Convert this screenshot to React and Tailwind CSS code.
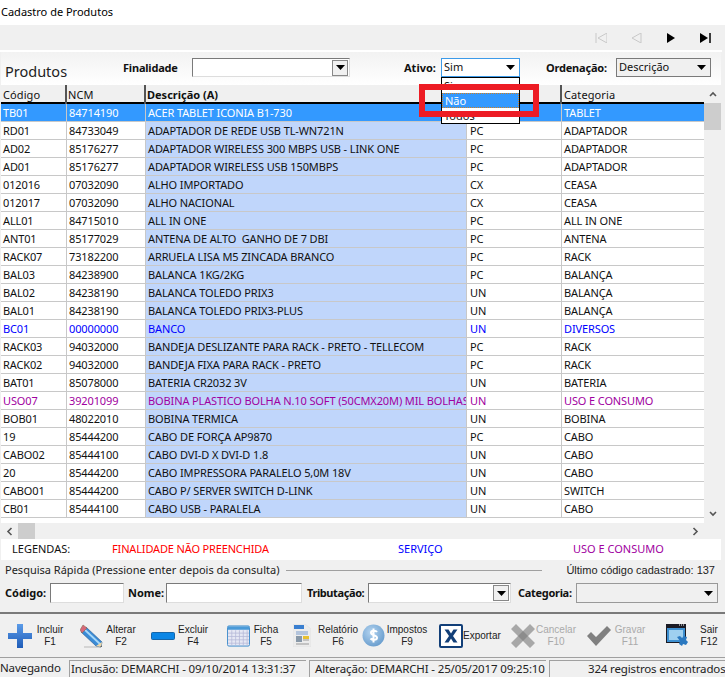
import React from "react";

const BLUE = "text-[#0000ff]";
const PURPLE = "text-[#a000a0]";

const rows = [
  ["TB01", "84714190", "ACER TABLET ICONIA B1-730", "", "TABLET"],
  ["RD01", "84733049", "ADAPTADOR DE REDE USB TL-WN721N", "PC", "ADAPTADOR"],
  ["AD02", "85176277", "ADAPTADOR WIRELESS 300 MBPS USB - LINK ONE", "PC", "ADAPTADOR"],
  ["AD01", "85176277", "ADAPTADOR WIRELESS USB 150MBPS", "PC", "ADAPTADOR"],
  ["012016", "07032090", "ALHO IMPORTADO", "CX", "CEASA"],
  ["012017", "07032090", "ALHO NACIONAL", "CX", "CEASA"],
  ["ALL01", "84715010", "ALL IN ONE", "PC", "ALL IN ONE"],
  ["ANT01", "85177029", "ANTENA DE ALTO  GANHO DE 7 DBI", "PC", "ANTENA"],
  ["RACK07", "73182200", "ARRUELA LISA M5 ZINCADA BRANCO", "PC", "RACK"],
  ["BAL03", "84238900", "BALANCA 1KG/2KG", "PC", "BALANÇA"],
  ["BAL02", "84238190", "BALANCA TOLEDO PRIX3", "UN", "BALANÇA"],
  ["BAL01", "84238190", "BALANCA TOLEDO PRIX3-PLUS", "UN", "BALANÇA"],
  ["BC01", "00000000", "BANCO", "UN", "DIVERSOS", BLUE],
  ["RACK03", "94032000", "BANDEJA DESLIZANTE PARA RACK - PRETO - TELLECOM", "PC", "RACK"],
  ["RACK02", "94032000", "BANDEJA FIXA PARA RACK - PRETO", "PC", "RACK"],
  ["BAT01", "85078000", "BATERIA CR2032 3V", "UN", "BATERIA"],
  ["USO07", "39201099", "BOBINA PLASTICO BOLHA N.10 SOFT (50CMX20M) MIL BOLHAS", "UN", "USO E CONSUMO", PURPLE],
  ["BOB01", "48022010", "BOBINA TERMICA", "UN", "BOBINA"],
  ["19", "85444200", "CABO DE FORÇA AP9870", "PC", "CABO"],
  ["CABO02", "85444100", "CABO DVI-D X DVI-D 1.8", "UN", "CABO"],
  ["20", "85444200", "CABO IMPRESSORA PARALELO 5,0M 18V", "UN", "CABO"],
  ["CABO01", "85444200", "CABO P/ SERVER SWITCH D-LINK", "UN", "SWITCH"],
  ["CB01", "85444100", "CABO USB - PARALELA", "UN", "CABO"],
];

const cols = "grid grid-cols-[66px_79px_321px_95px_142px]";

const Arrow = () => (
  <svg width="9" height="5" viewBox="0 0 9 5"><path d="M0 0h9L4.5 5z" fill="#000" /></svg>
);

// combo with the square 3D button
const Combo = ({ className }) => (
  <div className={`flex items-center justify-end bg-white border border-[#7a7a7a] border-r-[#ddd] border-b-[#ddd] pr-[1px] ${className}`}>
    <div className="w-[16px] h-[16px] bg-[#f0f0f0] border border-[#888] flex items-center justify-center">
      <Arrow />
    </div>
  </div>
);

const PlusIcon = () => (
  <svg width="24" height="24" viewBox="0 0 24 24">
    <defs>
      <linearGradient id="pl" x1="0" y1="0" x2="0" y2="1">
        <stop offset="0" stopColor="#5b9be8" />
        <stop offset="1" stopColor="#1f5cb8" />
      </linearGradient>
    </defs>
    <path d="M9 0h6v9h9v6h-9v9H9v-9H0V9h9z" fill="url(#pl)" />
  </svg>
);

const PencilIcon = () => (
  <svg width="23" height="24" viewBox="0 0 23 24">
    <path d="M4 23h17" stroke="#d4d4d4" strokeWidth="2" />
    <path d="M6 3l16 15-1 5-5-1L1 8z" fill="#3a8bd6" stroke="#25598f" strokeWidth=".6" />
    <path d="M5 6l15 14" stroke="#a8d8f8" strokeWidth="1.800" />
    <path d="M3 1l4 3-5 5-2-3z" fill="#d8687a" stroke="#8a6a50" strokeWidth=".6" />
    <path d="M16 22l5 1 1-5z" fill="#f0d8a8" />
    <path d="M20 22.500l1.500.5.500-1.500z" fill="#333" />
  </svg>
);

const MinusIcon = () => (
  <svg width="24" height="8" viewBox="0 0 24 8">
    <rect x=".5" y=".5" width="23" height="7" rx="1" fill="#0a86e6" stroke="#1565a8" />
  </svg>
);

const CalendarIcon = () => (
  <svg width="24" height="22" viewBox="0 0 24 22">
    <rect x=".5" y=".5" width="23" height="21" rx="1.500" fill="#e6e8f4" stroke="#3d8ccc" />
    <rect x="1" y="1" width="22" height="3.500" fill="#4a9ad8" />
    <path d="M1 8h22M1 11.500h22M1 15h22M1 18.500h22M5 5v16M9 5v16M13 5v16M17 5v16M21 5v16" stroke="#b4b8d8" strokeWidth=".8" />
  </svg>
);

const ReportIcon = () => (
  <svg width="18" height="23" viewBox="0 0 18 23">
    <path d="M0 0h12l6 5v18H0z" fill="#ececec" stroke="#ddd" strokeWidth=".5" />
    <path d="M1 1h10v4H1z" fill="#3a7fd0" />
    <path d="M3 8h12M3 10h12" stroke="#7a9ccc" />
    <path d="M10 12h6v3h-6z" fill="#e8c030" />
    <path d="M3 12h6v6H3z" fill="#8898a8" />
    <path d="M10 16h6M3 20h13" stroke="#999" />
  </svg>
);

const DollarIcon = () => (
  <svg width="23" height="23" viewBox="0 0 23 23">
    <defs>
      <radialGradient id="dl" cx=".4" cy=".35" r=".8">
        <stop offset="0" stopColor="#b4d4f0" />
        <stop offset="1" stopColor="#5c94c8" />
      </radialGradient>
    </defs>
    <circle cx="11.500" cy="11.500" r="11" fill="url(#dl)" />
    <path d="M15 8c-1-1.500-6-2-6 .8 0 3 6 1.800 6 5 0 2.800-5 2.500-6.500.7M11.500 4.500v14" fill="none" stroke="#fff" strokeWidth="2" />
  </svg>
);

const ExcelIcon = () => (
  <svg width="24" height="24" viewBox="0 0 24 24">
    <rect x="1" y="1" width="22" height="22" rx="1" fill="#fff" stroke="#123f78" strokeWidth="2" />
    <path d="M5.500 5.500h4l2.500 4 2.500-4h4L14 12l4.500 6.500h-4L12 14.500l-2.500 4h-4L10 12z" fill="#123f78" />
  </svg>
);

const CancelIcon = () => (
  <svg width="24" height="24" viewBox="0 0 24 24">
    <path d="M5 0l7 7 7-7 5 5-7 7 7 7-5 5-7-7-7 7-5-5 7-7-7-7z" fill="#a8a8a8" />
    <path d="M12 7l5 5-5 5-5-5z" fill="#8c8c8c" />
  </svg>
);

const CheckIcon = () => (
  <svg width="24" height="20" viewBox="0 0 24 20">
    <path d="M0 10l4-4 5 5L20 0l4 4L9 20z" fill="#808080" />
  </svg>
);

const ExitIcon = () => (
  <svg width="23" height="23" viewBox="0 0 23 23">
    <rect x="0" y="0" width="20" height="19" fill="#1a1a24" />
    <rect x="1" y="4" width="18" height="14" fill="#3d8fd0" />
    <rect x="3" y="6" width="14" height="10" fill="#9fd0f0" />
    <path d="M13 1h1M15 1h1M17 1h1" stroke="#fff" />
    <path d="M11 13l3-1 2 2 2-2 3 1-1 3 2 2-2 3-3-1-1 2-3-2 1-3z" fill="#2a78c0" />
  </svg>
);

const tools = [
  { icon: <PlusIcon />, a: "Incluir", b: "F1", cls: "w-[60px]", label: "w-[36px]" },
  { icon: <PencilIcon />, a: "Alterar", b: "F2", cls: "w-[59px] ml-[12px]", label: "w-[36px]" },
  { icon: <MinusIcon />, a: "Excluir", b: "F4", cls: "w-[60px] ml-[12px]", label: "w-[36px]" },
  { icon: <CalendarIcon />, a: "Ficha", b: "F5", cls: "w-[55px] ml-[16px]", label: "w-[32px]" },
  { icon: <ReportIcon />, a: "Relatório", b: "F6", cls: "w-[67px] ml-[11px]", label: "w-[44px] ml-[5px]" },
  { icon: <DollarIcon />, a: "Impostos", b: "F9", cls: "w-[67px] ml-[2px]", label: "w-[44px]" },
  { icon: <ExcelIcon />, a: "Exportar", cls: "w-[60px] ml-[10px]", label: "w-[36px]" },
  { icon: <CancelIcon />, a: "Cancelar", b: "F10", cls: "w-[66px] ml-[12px]", label: "w-[42px] text-[#aaa]" },
  { icon: <CheckIcon />, a: "Gravar", b: "F11", cls: "w-[62px] ml-[10px]", label: "w-[38px] text-[#aaa]" },
  { icon: <ExitIcon />, a: "Sair", b: "F12", cls: "w-[58px] ml-[17px]", label: "w-[30px] ml-[5px]" },
];

export default function App() {
  return (
    <div className="w-[725px] h-[677px] overflow-hidden bg-[#f0f0f0] text-[11px] text-[#111] font-['Noto_Sans',sans-serif] flex flex-col">
      <div className="h-[25px] bg-white pl-[1px] flex items-center text-black">Cadastro de Produtos</div>

      {/* nav buttons */}
      <div className="h-[25px] flex items-center justify-end pr-[14px] gap-[24px]">
        <svg width="12" height="10" viewBox="0 0 12 10"><path d="M1 0v10M12 0v10L3 5z" fill="none" stroke="#c8c8c8" /></svg>
        <svg width="11" height="10" viewBox="0 0 11 10"><path d="M10 0v10L1 5z" fill="none" stroke="#c8c8c8" /></svg>
        <svg width="10" height="10" viewBox="0 0 10 10"><path d="M1 0l8 5-8 5z" fill="#000" /></svg>
        <svg width="11" height="10" viewBox="0 0 11 10"><path d="M0 0l8 5-8 5z" fill="#000" /><path d="M10 0v10" stroke="#000" strokeWidth="1.500" /></svg>
      </div>

      <div className="h-[2px] bg-white mr-[3px]" />

      {/* main panel */}
      <div className="relative ml-[1px] mr-[4px] bg-white">
        <div className="h-[33px] flex items-start bg-gradient-to-b from-[#f2f2f2] to-white">
          <div className="w-[122px] pl-[4px] pt-[9px] text-[14.500px] leading-[20px] text-[#222]">Produtos</div>
          <div className="w-[69px] pt-[8px] font-bold text-[#111] leading-[15px] tracking-[-0.2px]">Finalidade</div>
          <Combo className="w-[158px] h-[19px] mt-[6px]" />
          <div className="ml-[54px] w-[37px] pt-[8px] font-bold leading-[15px]">Ativo:</div>
          <div className="w-[79px] h-[19px] mt-[6px] bg-white border border-[#3d9be9] flex items-center justify-between pl-[2px] pr-[4px]">
            Sim <Arrow />
          </div>
          <div className="ml-[26px] w-[70px] pt-[8px] font-bold leading-[15px] whitespace-nowrap tracking-[-0.2px]">Ordenação:</div>
          <div className="w-[95px] h-[19px] mt-[6px] bg-[#f0f0f0] border border-[#7a7a7a] flex items-center justify-between pl-[2px] pr-[4px]">
            Descrição <Arrow />
          </div>
        </div>

        <div className="flex">
          <div className="w-[703px] tracking-[-0.12px]">
            <div className={`${cols} h-[19px] bg-[#f0f0f0] border-b-2 border-black leading-[19px] tracking-[0.1px]`}>
              <div className="pl-[2px] border-r-2 border-[#555]">Código</div>
              <div className="pl-[1px] border-r-2 border-[#555]">NCM</div>
              <div className="pl-[1px] font-bold border-r border-[#aaa] tracking-normal">Descrição (A)</div>
              <div className="border-r-2 border-[#555]" />
              <div className="pl-[2px]">Categoria</div>
            </div>
            {rows.map((r, i) => {
              const sel = i === 0;
              const color = sel ? "text-white" : r[5] || "text-[#111]";
              return (
                <div key={r[0]} className={`${cols} h-[18px] leading-[17px] border-b border-[#c8c8c8] ${color} ${sel ? "bg-[#3399ff]" : "bg-white"}`}>
                  <div className="pl-[2px] border-r border-[#c8c8c8]">{r[0]}</div>
                  <div className="pl-[2px] border-r border-[#c8c8c8]">{r[1]}</div>
                  <div className={`pl-[2px] whitespace-pre overflow-hidden border-r border-[#c8c8c8] ${sel ? "" : "bg-[#c0d6fb]"}`}>{r[2]}</div>
                  <div className="pl-[3px] border-r border-[#c8c8c8]">{r[3]}</div>
                  <div className="pl-[2px]">{r[4]}</div>
                </div>
              );
            })}
          </div>
          {/* vertical scrollbar */}
          <div className="w-[17px] bg-[#f0f0f0] flex flex-col items-center justify-between h-[438px] pb-[1px]">
            <div className="w-full">
              <div className="h-[18px] flex items-center justify-center">
                <svg width="8" height="6" viewBox="0 0 8 6"><path d="M1 5l3-3 3 3" fill="none" stroke="#555" strokeWidth="1.600" /></svg>
              </div>
              <div className="h-[27px] bg-[#cdcdcd]" />
            </div>
            <div className="h-[17px] flex items-center justify-center">
              <svg width="8" height="6" viewBox="0 0 8 6"><path d="M1 1l3 3 3-3" fill="none" stroke="#555" strokeWidth="1.600" /></svg>
            </div>
          </div>
        </div>

        {/* open Ativo list, over the grid */}
        <div className="absolute left-[440px] top-[25px] w-[79px] h-[47px] bg-white border border-black leading-[15px] text-[#111]">
          <div className="pl-[2px]">Sim</div>
          <div className="pl-[2px] bg-[#3399ff] text-white border border-dotted border-[#d08020] leading-[13px]">Não</div>
          <div className="pl-[2px]">Todos</div>
        </div>
        {/* red highlight drawn on the screenshot */}
        <div className="absolute left-[418px] top-[32px] w-[120px] h-[33px] border-[6px] border-[#ed1c24]" />
      </div>

      {/* horizontal scrollbar */}
      <div className="h-[16px] flex items-center justify-between pl-[6px] pr-[3px]">
        <div className="flex items-center">
          <svg width="7" height="9" viewBox="0 0 7 9"><path d="M5.500 1l-3.500 3.500 3.500 3.500" fill="none" stroke="#555" strokeWidth="1.600" /></svg>
          <div className="w-[17px] h-[16px] bg-[#cdcdcd] ml-[5px]" />
        </div>
        <svg width="7" height="9" viewBox="0 0 7 9" className="mr-[23px]"><path d="M1.500 1L5 4.500 1.500 8" fill="none" stroke="#555" strokeWidth="1.600" /></svg>
      </div>

      {/* legends */}
      <div className="h-[21px] bg-white ml-[1px] mr-[4px] flex items-center">
        <div className="w-[111px] pl-[11px]">LEGENDAS:</div>
        <div className="w-[286px] text-[#ff0000] tracking-[-0.15px]">FINALIDADE NÃO PREENCHIDA</div>
        <div className="w-[175px] text-[#0000ff]">SERVIÇO</div>
        <div className="text-[#a000a0]">USO E CONSUMO</div>
      </div>

      {/* quick search */}
      <div className="h-[20px] flex items-center pl-[5px] pr-[10px] text-[#222]">
        <div className="whitespace-nowrap">Pesquisa Rápida (Pressione enter depois da consulta)</div>
        <div className="flex-1 h-[1px] bg-[#a0a0a0] mx-[7px]" />
        <div className="whitespace-nowrap ml-[17px] font-['Liberation_Sans',sans-serif]">Último código cadastrado: 137</div>
      </div>
      <div className="h-[32px] flex items-start pt-[3px] pl-[5px] font-bold">
        <div className="w-[45px] leading-[20px]">Código:</div>
        <div className="w-[74px] h-[20px] bg-white border border-[#7a7a7a] border-r-[#ddd] border-b-[#ddd]" />
        <div className="ml-[4px] w-[38px] leading-[20px]">Nome:</div>
        <div className="w-[136px] h-[20px] bg-white border border-[#7a7a7a] border-r-[#ddd] border-b-[#ddd]" />
        <div className="ml-[5px] w-[61px] leading-[20px] tracking-[-0.4px]">Tributação:</div>
        <Combo className="w-[143px] h-[20px]" />
        <div className="ml-[7px] w-[58px] leading-[20px] tracking-[-0.3px]">Categoria:</div>
        <div className="w-[142px] h-[20px] bg-[#f0f0f0] border border-[#999] flex items-center justify-end pr-[4px]">
          <Arrow />
        </div>
      </div>

      {/* toolbar */}
      <div className="h-[45px] border-t-2 border-[#7a7a7a] flex items-center pl-[8px] overflow-hidden">
        {tools.map((t) => (
          <div key={t.a} className={`flex items-center shrink-0 ${t.cls}`}>
            {t.icon}
            <div className={`shrink-0 text-center text-[10px] leading-[12px] font-['Liberation_Sans',sans-serif] text-[#222] ${t.label}`}>
              <div>{t.a}</div>
              {t.b && <div>{t.b}</div>}
            </div>
          </div>
        ))}
      </div>

      {/* status bar */}
      <div className="h-[20px] border-t border-[#a0a0a0] flex items-end text-[11.500px] tracking-[-0.15px] leading-[16px] text-[#222]">
        <div className="w-[69px] h-[17px] shrink-0 whitespace-nowrap">Navegando</div>
        <div className="w-[237px] h-[17px] shrink-0 border-l border-t border-[#a0a0a0] pl-[1px] whitespace-nowrap">Inclusão: DEMARCHI - 09/10/2014 13:31:37</div>
        <div className="ml-[3px] w-[237px] h-[17px] shrink-0 border-l border-t border-[#a0a0a0] pl-[5px] whitespace-nowrap">Alteração: DEMARCHI - 25/05/2017 09:25:10</div>
        <div className="ml-[3px] w-[176px] h-[17px] shrink-0 border-l border-t border-[#a0a0a0] pl-[38px] whitespace-nowrap">324 registros encontrados</div>
      </div>
    </div>
  );
}
